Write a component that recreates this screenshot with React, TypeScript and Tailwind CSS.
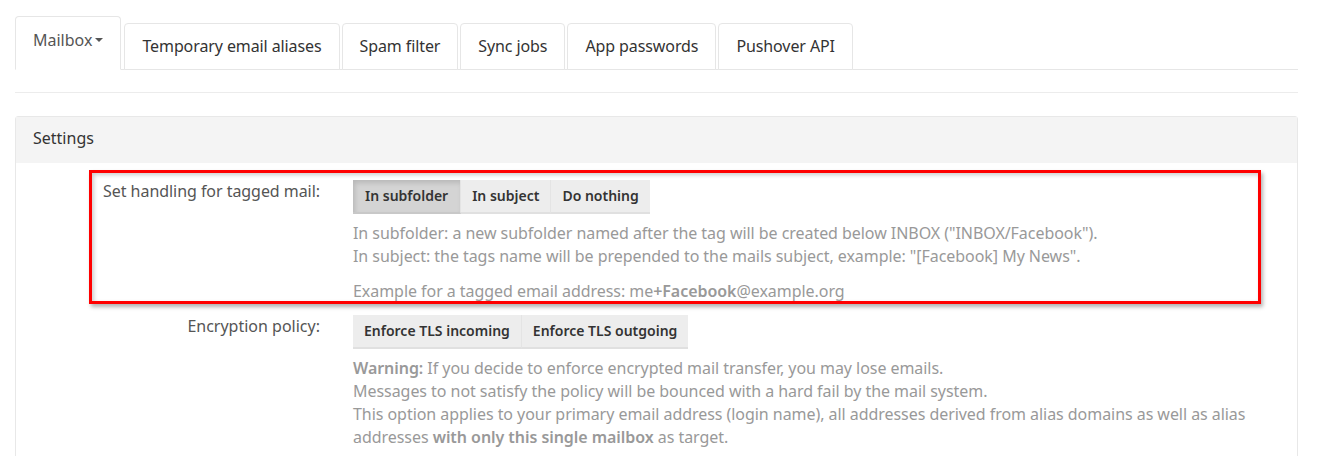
const tabs = ["Temporary email aliases", "Spam filter", "Sync jobs", "App passwords", "Pushover API"];

function BtnGroup({ items, active }: { items: string[]; active?: number }) {
  return (
    <div className="flex">
      {items.map((label, i) => (
        <button
          key={label}
          className={
            i === active
              ? "h-[34px] px-[12px] text-[14px] font-semibold text-[#333] bg-[#d4d4d4] shadow-[inset_2px_3px_5px_rgba(0,0,0,0.13)] border-b-2 border-[#c8c8c8] border-r border-r-[#e4e4e4]"
              : "h-[34px] px-[11px] text-[14px] font-semibold text-[#333] bg-[#ededed] border-b-2 border-[#e0e0e0] border-r border-r-[#e4e4e4] last:border-r-0"
          }
        >
          {label}
        </button>
      ))}
    </div>
  );
}

export default function App() {
  return (
    <div className="w-[1323px] h-[456px] overflow-hidden bg-white px-[15px] pt-[16px] text-[16px] leading-[22px] text-[#333] font-['Noto_Sans','Open_Sans',sans-serif]">
      <div className="w-[1283px]">
        {/* tabs */}
        <div className="flex items-end gap-[2px] border-b border-[#e6e6e6]">
          <div className="h-[54px] -mb-px mr-[1px] bg-white border border-[#e6e6e6] border-b-white rounded-t-[4px] px-[17px] pt-[12px] text-[#555]">
            Mailbox
            <span className="inline-block ml-[3px] mb-[3px] align-middle w-0 h-0 border-x-[4px] border-t-[4px] border-x-transparent border-t-[#555]" />
          </div>
          {tabs.map((t) => (
            <div
              key={t}
              className="h-[47px] -mb-px border border-[#e6e6e6] rounded-t-[4px] px-[17px] pt-[11px] bg-white text-[#333] tracking-[-0.1px]"
            >
              {t}
            </div>
          ))}
        </div>
        <div className="h-[23px] border-b border-[#ececec]" />

        {/* panel */}
        <div className="mt-[23px] border border-[#e8e8e8] rounded-[3px]">
          <div className="bg-[#f4f4f4] pl-[17px] pt-[10px] pb-[14px] text-[#333]">Settings</div>
          <div className="pt-[17px] pr-[15px] pb-[40px]">
            <div className="relative flex mb-[12px]">
              <div className="absolute -top-[10px] left-[73px] w-[1172px] h-[134px] border-[3px] border-[#f00] shadow-[2px_3px_4px_rgba(0,0,0,0.3),inset_2px_2px_4px_rgba(0,0,0,0.2)]" />
              <div className="w-[320px] shrink-0 pr-[16px] text-right text-[#555] tracking-[-0.05px]">Set handling for tagged mail:</div>
              <div className="pl-[17px] flex-1">
                <BtnGroup items={["In subfolder", "In subject", "Do nothing"]} active={0} />
                <div className="mt-[8px] leading-[23px] text-[#999] tracking-[-0.05px]">
                  In subfolder: a new subfolder named after the tag will be created below INBOX ("INBOX/Facebook").
                  <br />
                  In subject: the tags name will be prepended to the mails subject, example: "[Facebook] My News".
                </div>
                <div className="mt-[12px] leading-[23px] text-[#999] tracking-[-0.05px]">
                  Example for a tagged email address: me<b className="font-semibold">+Facebook</b>@example.org
                </div>
              </div>
            </div>

            <div className="flex">
              <div className="w-[320px] shrink-0 pr-[16px] text-right text-[#555]">Encryption policy:</div>
              <div className="pl-[17px] flex-1">
                <BtnGroup items={["Enforce TLS incoming", "Enforce TLS outgoing"]} />
                <div className="mt-[8px] leading-[23px] text-[#999] tracking-[-0.05px]">
                  <b className="font-semibold">Warning:</b> If you decide to enforce encrypted mail transfer, you may lose emails.
                  <br />
                  Messages to not satisfy the policy will be bounced with a hard fail by the mail system.
                  <br />
                  This option applies to your primary email address (login name), all addresses derived from alias domains as well as alias addresses <b className="font-semibold">with only this single mailbox</b> as target.
                </div>
              </div>
            </div>
          </div>
        </div>
      </div>
    </div>
  );
}
